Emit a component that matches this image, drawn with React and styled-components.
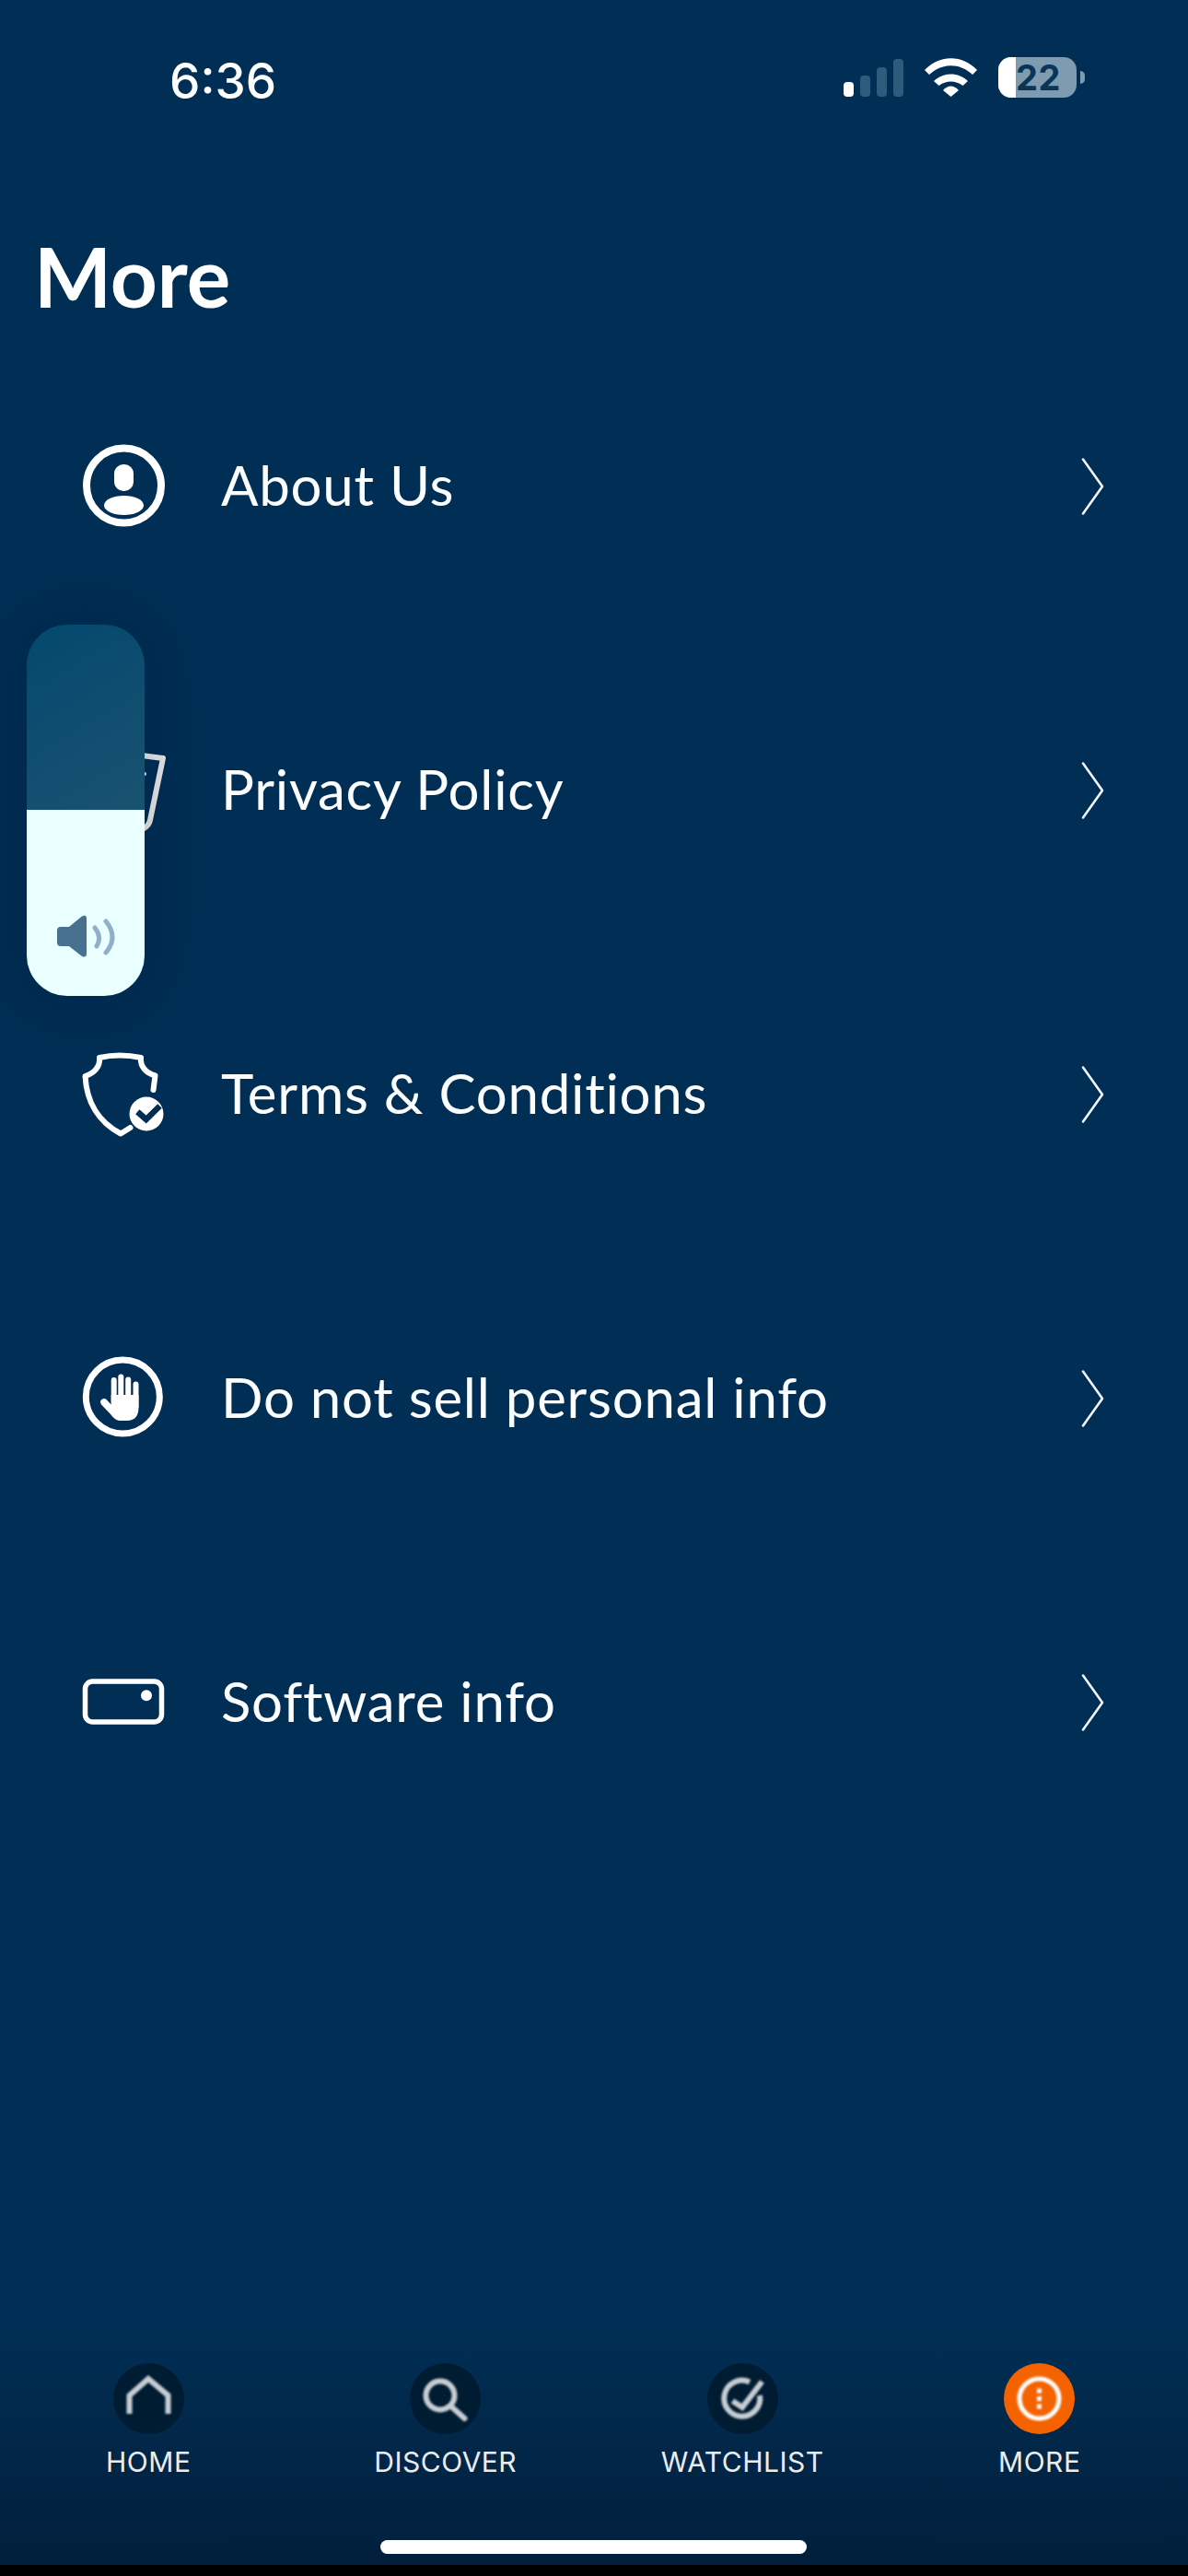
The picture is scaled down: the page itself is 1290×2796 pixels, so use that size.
import React from "react";
import styled, { createGlobalStyle } from "styled-components";

const Global = createGlobalStyle`
  html, body { margin: 0; padding: 0; background: #012e54; }
  * { box-sizing: border-box; }
`;

const Screen = styled.div`
  position: relative;
  width: 1290px;
  height: 2796px;
  overflow: hidden;
  display: flex;
  flex-direction: column;
  background: #012e54;
  color: #fff;
  font-family: "Lato", "Noto Sans", sans-serif;
`;

const StatusBar = styled.div`
  height: 172px;
  flex: none;
  display: flex;
  align-items: center;
  justify-content: space-between;
  padding: 4px 121px 0 184px;
`;

const Clock = styled.div`
  font-family: "Inter", sans-serif;
  font-weight: 500;
  font-size: 53px;
  line-height: 60px;
`;

const StatusIcons = styled.div`
  display: flex;
  align-items: center;
  gap: 23px;
  margin-top: -8px;
`;

const Battery = styled.div`
  position: relative;
  width: 85px;
  height: 44px;
  border-radius: 14px;
  background: #7e9bb0;
  display: flex;
  align-items: center;
  padding-left: 19px;
  font-family: "Inter", sans-serif;
  font-weight: 700;
  font-size: 38px;
  letter-spacing: 0.5px;
  color: #0b3557;
  &::after {
    content: "";
    position: absolute;
    right: -9px;
    top: 15px;
    width: 5px;
    height: 14px;
    border-radius: 0 7px 7px 0;
    background: #7e9bb0;
  }
`;

const BatteryFill = styled.div`
  position: absolute;
  left: 0;
  top: 0;
  bottom: 0;
  width: 19px;
  background: #fff;
  border-radius: 14px 0 0 14px;
`;

const Title = styled.h1`
  margin: 0;
  padding: 78px 0 13px 37px;
  font-size: 89px;
  line-height: 100px;
  font-weight: 700;
`;

const List = styled.div`
  flex: 1;
  display: flex;
  flex-direction: column;
`;

const Row = styled.div`
  height: 330px;
  flex: none;
  display: flex;
  align-items: center;
  padding: 0 88px 0 85px;
`;

const RowIcon = styled.svg`
  width: 100px;
  height: 100px;
  flex: none;
  overflow: visible;
`;

const RowLabel = styled.div`
  flex: 1;
  margin-left: 55px;
  padding-bottom: 4px;
  font-size: 60px;
  line-height: 72px;
  font-weight: 400;
  letter-spacing: 0.75px;
  color: #fbfdfe;
`;

const Chevron = styled.svg`
  width: 30px;
  height: 66px;
  flex: none;
`;

const VolumeHud = styled.div`
  position: absolute;
  left: 29px;
  top: 678px;
  width: 128px;
  height: 403px;
  border-radius: 44px;
  overflow: hidden;
  display: flex;
  flex-direction: column;
  box-shadow: 0 0 70px rgba(0, 22, 50, 0.28);
`;

const VolumeTrack = styled.div`
  height: 201px;
  flex: none;
  background: linear-gradient(150deg, #04486e 0%, #1a5271 100%);
`;

const VolumeFill = styled.div`
  flex: 1;
  background: #eaffff;
  display: flex;
  align-items: flex-end;
  justify-content: center;
  padding-bottom: 39px;
`;

const TabBar = styled.nav`
  height: 294px;
  flex: none;
  padding-top: 75px;
  display: grid;
  grid-template-columns: repeat(4, 1fr);
  background: linear-gradient(180deg, #012e54 0%, #012e54 15%, #011f3c 100%);
`;

const Tab = styled.div`
  display: flex;
  flex-direction: column;
  align-items: center;
  gap: 12px;
`;

const TabBadge = styled.div`
  width: 77px;
  height: 77px;
  border-radius: 50%;
  background: ${(p) => (p.$active ? "#f56300" : "#001c33")};
  display: flex;
`;

const TabGlyph = styled.svg`
  width: 77px;
  height: 77px;
  filter: blur(0.9px);
`;

const TabLabel = styled.div`
  font-family: "Inter", sans-serif;
  font-size: 30px;
  line-height: 36px;
  font-weight: 400;
  letter-spacing: 0.5px;
  color: #e9edf0;
`;

const HomeIndicator = styled.div`
  position: absolute;
  left: 413px;
  top: 2757px;
  width: 463px;
  height: 15px;
  border-radius: 8px;
  background: #fff;
`;

const BlackEdge = styled.div`
  height: 12px;
  flex: none;
  background: #000;
`;

const icons = {
  about: (
    <RowIcon viewBox="0 0 100 100">
      <circle cx="49.5" cy="49" r="40.5" fill="none" stroke="#fff" strokeWidth="8" />
      <rect x="39" y="26" width="21" height="29" rx="10" fill="#fff" />
      <ellipse cx="49.5" cy="70.5" rx="21.5" ry="10.5" fill="#fff" />
    </RowIcon>
  ),
  privacy: (
    <RowIcon viewBox="0 0 100 100">
      <path d="M30 7L92 15L78 82Q77 88 70 92" fill="none" stroke="#ececec" strokeWidth="6" strokeLinejoin="round" />
      <circle cx="72" cy="32" r="2" fill="#ececec" />
    </RowIcon>
  ),
  terms: (
    <RowIcon viewBox="0 0 100 100">
      <path
        d="M81.5 45L83.5 29.5C74 27 67 20 68 10C52 6.5 38 6.5 23 10C24 20 17 27 7.5 30C9 58 22 80 46 92.5L56.5 86"
        fill="none"
        stroke="#fff"
        strokeWidth="6"
        strokeLinecap="round"
        strokeLinejoin="round"
      />
      <circle cx="74" cy="71" r="18.5" fill="#fff" />
      <path d="M64.3 68.7L73.7 77L88.5 62.5" fill="none" stroke="#012e54" strokeWidth="6.5" />
    </RowIcon>
  ),
  sell: (
    <RowIcon viewBox="0 0 100 100">
      <circle cx="48.3" cy="48" r="40" fill="none" stroke="#fff" strokeWidth="7" />
      <rect x="35.7" y="27" width="6" height="30" rx="3" fill="#fff" />
      <rect x="43.3" y="23.5" width="6" height="30" rx="3" fill="#fff" />
      <rect x="51.2" y="26.5" width="6" height="30" rx="3" fill="#fff" />
      <rect x="59.5" y="31.5" width="6" height="30" rx="3" fill="#fff" />
      <path
        d="M35.7 46H65.5V60C65.5 69 61 74 53 74H46C41.5 74 38.5 71.5 35.5 67.5L25 56.5C23.5 54 24 52 25.5 51C27.5 49.5 29.5 50 31 51.5L35.7 56.5Z"
        fill="#fff"
      />
    </RowIcon>
  ),
  software: (
    <RowIcon viewBox="0 0 100 100">
      <rect x="7.5" y="27" width="83" height="44" rx="8" fill="none" stroke="#fff" strokeWidth="5.5" />
      <circle cx="74" cy="42.3" r="6" fill="#fff" />
    </RowIcon>
  ),
};

const rows = [
  ["about", "About Us"],
  ["privacy", "Privacy Policy"],
  ["terms", "Terms & Conditions"],
  ["sell", "Do not sell personal info"],
  ["software", "Software info"],
];

const tabs = [
  {
    label: "HOME",
    glyph: <path d="M17.5 55V35L38 17L59.5 35V55" fill="none" stroke="#c6cdd3" strokeWidth="6" />,
  },
  {
    label: "DISCOVER",
    glyph: (
      <g fill="none" stroke="#c6cdd3" strokeWidth="6" strokeLinecap="round">
        <circle cx="33" cy="35" r="15.5" />
        <path d="M45 47L59.5 60" />
      </g>
    ),
  },
  {
    label: "WATCHLIST",
    glyph: (
      <g fill="none" stroke="#c6cdd3" strokeWidth="6">
        <path d="M46 20.5A19.5 19.5 0 1 0 57 35" />
        <path d="M27.5 41L38 48L59.5 20" />
      </g>
    ),
  },
  {
    label: "MORE",
    active: true,
    glyph: (
      <g fill="#fff">
        <circle cx="38.5" cy="38.5" r="21.5" fill="none" stroke="#fff" strokeWidth="5" />
        <rect x="36" y="27.5" width="5" height="5" />
        <rect x="36" y="36" width="5" height="5" />
        <rect x="36" y="44.5" width="5" height="5" />
      </g>
    ),
  },
];

export default function App() {
  return (
    <Screen>
      <Global />
      <StatusBar>
        <Clock>6:36</Clock>
        <StatusIcons>
          <svg width="65" height="41" viewBox="0 0 65 41">
            <rect x="0" y="25" width="11" height="16" rx="4" fill="#fff" />
            <rect x="18" y="18" width="11" height="23" rx="4" fill="#2b5c7c" />
            <rect x="36" y="9" width="11" height="32" rx="4" fill="#2b5c7c" />
            <rect x="54" y="0" width="11" height="41" rx="4" fill="#2b5c7c" />
          </svg>
          <svg width="57" height="42" viewBox="0 0 57 42">
            <path d="M0 13C16 -4 41 -4 57 13L52 18C38 5 19 5 5 18Z" fill="#fff" />
            <path d="M10 25C20 15 37 15 47 25L41.5 30C34 24 23 24 15.5 30Z" fill="#fff" />
            <path d="M20 35C25 29 32 29 37 35L28.5 42Z" fill="#fff" />
          </svg>
          <Battery>
            <BatteryFill />
            22
          </Battery>
        </StatusIcons>
      </StatusBar>
      <Title>More</Title>
      <List>
        {rows.map(([key, label]) => (
          <Row key={key}>
            {icons[key]}
            <RowLabel>{label}</RowLabel>
            <Chevron viewBox="0 0 30 66">
              <path d="M4 3.5L25 33L4 62.5" fill="none" stroke="#f2f5f7" strokeWidth="2.6" strokeLinecap="round" strokeLinejoin="round" />
            </Chevron>
          </Row>
        ))}
      </List>
      <TabBar>
        {tabs.map((t) => (
          <Tab key={t.label}>
            <TabBadge $active={t.active}>
              <TabGlyph viewBox="0 0 77 77">{t.glyph}</TabGlyph>
            </TabBadge>
            <TabLabel>{t.label}</TabLabel>
          </Tab>
        ))}
      </TabBar>
      <BlackEdge />
      <HomeIndicator />
      <VolumeHud>
        <VolumeTrack />
        <VolumeFill>
          <svg width="70" height="50" viewBox="0 0 70 50">
            <path d="M8 14H17L31 2.5Q36 0 36 5V43Q36 48 31 46L17 35H8Q4 35 4 31V18Q4 14 8 14Z" fill="#48718f" />
            <path d="M45 15Q53 25 47 35" fill="none" stroke="#8fb0c8" strokeWidth="5" strokeLinecap="round" />
            <path d="M57 8Q71 25 57 42" fill="none" stroke="#8fb0c8" strokeWidth="5" strokeLinecap="round" />
          </svg>
        </VolumeFill>
      </VolumeHud>
    </Screen>
  );
}
